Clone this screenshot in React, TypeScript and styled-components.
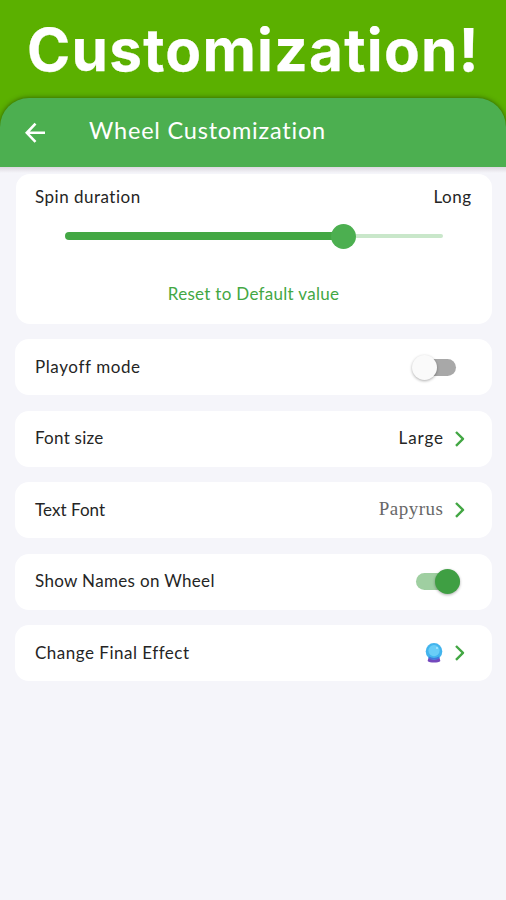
import React from "react";
import styled, { createGlobalStyle } from "styled-components";

const GlobalStyle = createGlobalStyle`
  * { box-sizing: border-box; }
  body { margin: 0; background: #f5f5fa; font-family: Lato, "Noto Sans", sans-serif; }
`;

const Page = styled.main`
  width: 506px;
  height: 900px;
  overflow: hidden;
  display: flex;
  flex-direction: column;
  background: #f5f5fa;
`;

const Banner = styled.div`
  flex: none;
  background: #5bb000;
`;

const Headline = styled.h1`
  margin: 0;
  height: 98px;
  padding: 0 0 0 27px;
  font: 700 58.5px/100px Inter, sans-serif;
  letter-spacing: 1.25px;
  -webkit-text-stroke: 0.25px #fff;
  color: #fff;
  white-space: nowrap;
`;

const AppBar = styled.header`
  height: 69px;
  display: flex;
  align-items: center;
  padding: 0 22px;
  gap: 41px;
  border-radius: 29px 29px 0 0;
  background: #4caf50;
  box-shadow: 0 0 5px rgba(30, 60, 0, 0.75);
  clip-path: inset(-8px 0 0 0);
`;

const BarTitle = styled.h2`
  margin: 0;
  padding-bottom: 5px;
  font-size: 23.5px;
  line-height: 28px;
  font-weight: 400;
  letter-spacing: 0.8px;
  color: #fff;
  white-space: nowrap;
`;

const Content = styled.section`
  flex: 1;
  display: flex;
  flex-direction: column;
  gap: 15.3px;
  padding: 7px 14px 0 15px;
  background: linear-gradient(#dcd8df, #f5f5fa 6px);
`;

const Card = styled.div`
  flex: none;
  border-radius: 14px;
  background: #fff;
`;

const DurationCard = styled(Card)`
  height: 150px;
  margin-left: 1px;
  padding: 12px 21px 0 19px;
  display: flex;
  flex-direction: column;
`;

const Row = styled(Card)`
  height: 56.2px;
  padding: 0 26px 0 20px;
  display: flex;
  align-items: center;
  justify-content: space-between;
`;

const Split = styled.div`
  display: flex;
  justify-content: space-between;
`;

const Label = styled.span<{ $track?: number }>`
  font-size: 17px;
  line-height: 22px;
  padding-bottom: 1px;
  letter-spacing: ${(p) => p.$track ?? 0.5}px;
  margin-right: ${(p) => -(p.$track ?? 0.5)}px;
  color: #252525;
  white-space: nowrap;
`;

const ScriptLabel = styled(Label)`
  padding-bottom: 3px;
  font-family: "Liberation Serif", serif;
  font-size: 19px;
  color: #686868;
`;

const Slider = styled.div`
  display: flex;
  align-items: center;
  height: 26px;
  margin: 14px 28px 0 30px;
`;

const SliderFill = styled.div`
  width: 267px;
  margin-right: -1px;
  height: 8px;
  border-radius: 4px 0 0 4px;
  background: #43a744;
`;

const SliderThumb = styled.div`
  width: 25px;
  height: 25px;
  border-radius: 50%;
  background: #4caf50;
`;

const SliderRest = styled.div`
  flex: 1;
  height: 4px;
  border-radius: 0 2px 2px 0;
  background: #c9e7ca;
`;

const ResetButton = styled.button`
  align-self: center;
  margin: 34px 0 0 1px;
  padding: 0;
  border: 0;
  background: none;
  font: 400 17px/22px Lato, sans-serif;
  letter-spacing: 0.3px;
  color: #43a744;
  white-space: nowrap;
`;

const Trailing = styled.div`
  display: flex;
  align-items: center;
  gap: 11px;
`;

const Switch = styled.div<{ $on?: boolean }>`
  width: ${(p) => (p.$on ? 44 : 40)}px;
  height: 17px;
  margin: 0 ${(p) => (p.$on ? 6 : 10)}px 0 0;
  display: flex;
  align-items: center;
  justify-content: ${(p) => (p.$on ? "flex-end" : "flex-start")};
  border-radius: 9px;
  background: ${(p) => (p.$on ? "#9fcfa1" : "#a8a8a8")};
`;

const Knob = styled.div<{ $on?: boolean }>`
  flex: none;
  width: 25px;
  height: 25px;
  margin-left: ${(p) => (p.$on ? 0 : -4)}px;
  border-radius: 50%;
  background: ${(p) => (p.$on ? "#3f9f43" : "#fafafa")};
  box-shadow: 0 1px 3px rgba(0, 0, 0, 0.32);
`;

const BackArrow = () => (
  <svg width="26" height="26" viewBox="0 0 26 26" fill="none" stroke="#fff" strokeWidth="2.6">
    <path d="M13.5 3.7 4.8 12.8l8.7 9.1M5 12.8h18" />
  </svg>
);

const Chevron = () => (
  <svg width="12" height="18" viewBox="0 0 12 18" fill="none" stroke="#43a744" strokeWidth="2.4" strokeLinejoin="round">
    <path d="M2 2 9 8.9 2 15.8" />
  </svg>
);

const CrystalBall = () => (
  <svg width="18" height="20" viewBox="0 0 18 20">
    <path d="M3.8 14h10.4l1.2 4c-2 2-10.8 2-12.8 0Z" fill="#7448bd" />
    <circle cx="9" cy="8.4" r="8.3" fill="#42b4ed" />
    <circle cx="9" cy="7.6" r="5.6" fill="#69cdf7" />
    <circle cx="12" cy="5" r="1.1" fill="#a7e6ff" />
    <path d="M4 13.6c3.1 1.8 6.9 1.8 10 0l.4 1.8c-3.4 1.6-7.4 1.6-10.8 0Z" fill="#4179dc" />
  </svg>
);

export default function App() {
  return (
    <Page>
      <GlobalStyle />
      <Banner>
        <Headline>Customization!</Headline>
        <AppBar>
          <BackArrow />
          <BarTitle>Wheel Customization</BarTitle>
        </AppBar>
      </Banner>
      <Content>
        <DurationCard>
          <Split>
            <Label>Spin duration</Label>
            <Label>Long</Label>
          </Split>
          <Slider>
            <SliderFill />
            <SliderThumb />
            <SliderRest />
          </Slider>
          <ResetButton>Reset to Default value</ResetButton>
        </DurationCard>
        <Row>
          <Label $track={0.6}>Playoff mode</Label>
          <Switch><Knob /></Switch>
        </Row>
        <Row>
          <Label $track={0.25}>Font size</Label>
          <Trailing>
            <Label $track={0.9}>Large</Label>
            <Chevron />
          </Trailing>
        </Row>
        <Row>
          <Label $track={0.05}>Text Font</Label>
          <Trailing>
            <ScriptLabel $track={0.5}>Papyrus</ScriptLabel>
            <Chevron />
          </Trailing>
        </Row>
        <Row>
          <Label $track={0.33}>Show Names on Wheel</Label>
          <Switch $on><Knob $on /></Switch>
        </Row>
        <Row>
          <Label $track={0.5}>Change Final Effect</Label>
          <Trailing>
            <CrystalBall />
            <Chevron />
          </Trailing>
        </Row>
      </Content>
    </Page>
  );
}
